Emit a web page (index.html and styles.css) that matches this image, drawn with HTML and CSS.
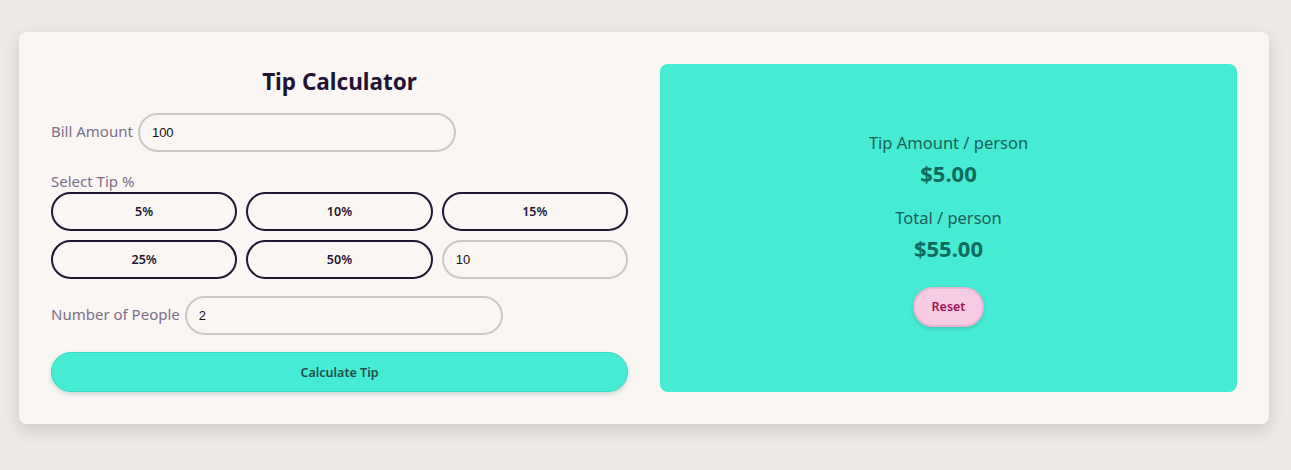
FILE: index.html
```html
<!DOCTYPE html>
<html lang="en">
<head>
<meta charset="utf-8">
<title>Tip Calculator</title>
<link rel="stylesheet" href="styles.css">
</head>
<body>
<main class="card">
  <section class="form">
    <h1 class="title">Tip Calculator</h1>
    <div class="field-row bill">
      <label class="label row-label" for="bill">Bill Amount</label>
      <input class="pill-input" id="bill" type="text" value="100">
    </div>
    <div class="tip-section">
      <div class="label tip-label">Select Tip %</div>
      <div class="tip-grid">
        <button class="tip-btn">5%</button>
        <button class="tip-btn">10%</button>
        <button class="tip-btn">15%</button>
        <button class="tip-btn">25%</button>
        <button class="tip-btn">50%</button>
        <input class="pill-input custom" type="text" value="10">
      </div>
    </div>
    <div class="field-row people">
      <label class="label row-label" for="people">Number of People</label>
      <input class="pill-input" id="people" type="text" value="2">
    </div>
    <button class="calc-btn">Calculate Tip</button>
  </section>
  <section class="result">
    <div class="res-label">Tip Amount / person</div>
    <div class="res-value">$5.00</div>
    <div class="res-label second">Total / person</div>
    <div class="res-value">$55.00</div>
    <button class="reset-btn">Reset</button>
  </section>
</main>
</body>
</html>
```
FILE: styles.css
```css
* { box-sizing: border-box; }
html, body { margin: 0; padding: 0; }
body {
  background: #eeeae6;
  font-family: "Noto Sans", "Open Sans", sans-serif;
  padding: 32px 22px 0 19px;
  width: 1291px;
  height: 470px;
}
.card {
  width: 1250px;
  background: #faf6f4;
  border-radius: 8px;
  box-shadow: 0 6px 16px rgba(60, 45, 40, 0.18);
  padding: 32px;
  display: grid;
  grid-template-columns: 577px 577px;
  column-gap: 32px;
}
.form { display: flex; flex-direction: column; }
.title {
  margin: 0;
  font-size: 22.5px;
  line-height: 36px;
  font-weight: 700;
  text-align: center;
  color: #1f1433;
}
.field-row { display: flex; align-items: center; gap: 5px; }
.bill { margin-top: 13px; }
.people { margin-top: 17px; }
.label {
  font-size: 15px;
  color: #7b6f88;
}
.row-label { padding-bottom: 4px; }
.pill-input {
  width: 318px;
  height: 39px;
  border: 2px solid #ccc7c9;
  border-radius: 20px;
  background: #faf6f4;
  font-family: "Liberation Sans", Arial, sans-serif;
  font-size: 13px;
  color: #111;
  padding: 0 12px;
  outline: none;
}
.tip-section { margin-top: 19px; }
.tip-label { line-height: 20px; margin-bottom: 1px; }
.tip-grid {
  display: grid;
  grid-template-columns: repeat(3, minmax(0, 1fr));
  gap: 9px;
}
.tip-btn {
  width: 100%;
  height: 39px;
  border: 2px solid #231733;
  border-radius: 20px;
  background: #faf6f4;
  font-family: "Noto Sans", sans-serif;
  font-size: 12.5px;
  font-weight: 600;
  color: #231733;
}
.custom { width: 100%; }
.calc-btn {
  margin-top: 17px;
  height: 40px;
  border: 1px solid #3ad8c1;
  border-radius: 20px;
  background: #45ebd3;
  box-shadow: 0 2px 4px rgba(40, 120, 110, 0.25);
  font-family: "Noto Sans", sans-serif;
  font-size: 12.5px;
  font-weight: 600;
  color: #1d4f4a;
}
.result {
  background: #45ebd3;
  border-radius: 8px;
  height: 328px;
  display: flex;
  flex-direction: column;
  align-items: center;
  justify-content: center;
  padding-top: 2px;
}
.res-label {
  font-size: 16.5px;
  line-height: 22px;
  color: #1b5f57;
}
.res-label.second { margin-top: 19px; }
.res-value {
  margin-top: 4px;
  font-size: 22px;
  line-height: 30px;
  font-weight: 700;
  color: #0f6a5f;
}
.reset-btn {
  margin-top: 24px;
  width: 71px;
  height: 40px;
  border: 2px solid #e8b6d2;
  border-radius: 20px;
  background: #f8cbe4;
  box-shadow: 0 2px 4px rgba(40, 120, 110, 0.25);
  font-family: "Noto Sans", sans-serif;
  font-size: 12.5px;
  font-weight: 600;
  color: #9c1450;
}
```
